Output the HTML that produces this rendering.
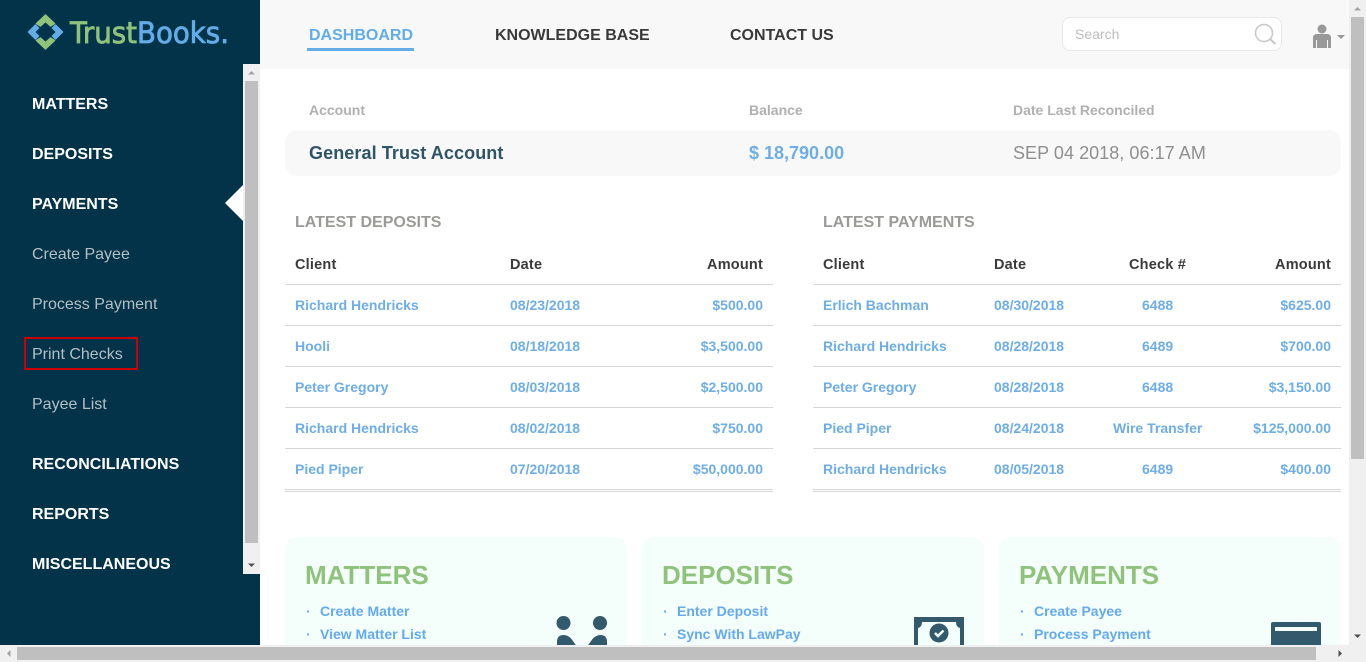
<!DOCTYPE html>
<html><head><meta charset="utf-8"><title>TrustBooks Dashboard</title>
<style>
html,body{margin:0;padding:0;width:1366px;height:662px;overflow:hidden;background:#fff;font-family:"Liberation Sans",Arial,sans-serif}
div,span,a{position:absolute;white-space:nowrap}
.n{left:32px;color:#fff;font-weight:700;font-size:16px;line-height:20px}
.s{left:32px;color:#b4bfc4;font-size:16px;line-height:20px}
.top{top:26px;font-size:16px;font-weight:700;line-height:20px;color:#3a3a3a}
.lbl{top:102px;font-size:14px;font-weight:700;line-height:16px;color:#b0b0b0}
.h{top:213px;font-size:16px;font-weight:700;line-height:18px;color:#9a9a96;padding-top:0}
.th{top:255px;font-size:14.5px;font-weight:700;line-height:18px;color:#3a3a3a;letter-spacing:.2px}
.c{font-size:14px;font-weight:700;line-height:18px;color:#6eaee6}
.r{text-align:right}
.ln{height:1px;background:#d6d6d6}
.card{top:537px;height:125px;width:342px;background:#f4fffb;border-radius:12px}
.ct{top:559px;font-size:26px;font-weight:700;line-height:32px;color:#8fc27a}
.li{font-size:14px;font-weight:700;line-height:18px;color:#65a9ee}
.d{font-size:14px;font-weight:700;line-height:18px;color:#65a9ee}
svg{position:absolute;display:block}
</style></head><body>

<!-- main top bar -->
<div style="left:260px;top:0;width:1106px;height:69px;background:#f8f8f8"></div>
<div class="top" style="left:309px;color:#62ace8">DASHBOARD</div>
<div style="left:307px;top:48px;width:107px;height:3px;background:#62ace8"></div>
<div class="top" style="left:495px">KNOWLEDGE BASE</div>
<div class="top" style="left:730px">CONTACT US</div>

<div style="left:1062px;top:17px;width:218px;height:32px;background:#fff;border:1px solid #e8e8e8;border-radius:8px"></div>
<div style="left:1075px;top:26px;font-size:14px;line-height:16px;color:#bdbdbd">Search</div>
<svg style="left:1254px;top:23px" width="24" height="22" viewBox="0 0 24 22"><circle cx="10" cy="10" r="8.5" fill="none" stroke="#c8c8c8" stroke-width="1.6"/><path d="M16 16l5.500 5" stroke="#c8c8c8" stroke-width="2" fill="none"/></svg>
<svg style="left:1312px;top:24px" width="34" height="26" viewBox="0 0 34 26"><circle cx="10" cy="5" r="4.500" fill="#999"/><path d="M1 24V14q0-4 4-4h10q4 0 4 4v10h-3v-8h-1v8H5v-8H4v8z" fill="#999"/><path d="M25 11h8l-4 4z" fill="#999"/></svg>

<!-- account -->
<div class="lbl" style="left:309px">Account</div>
<div class="lbl" style="left:749px">Balance</div>
<div class="lbl" style="left:1013px">Date Last Reconciled</div>
<div style="left:285px;top:130px;width:1056px;height:46px;background:#f8f8f8;border-radius:12px"></div>
<div style="left:309px;top:142px;font-size:18px;font-weight:700;line-height:22px;color:#2f5468;letter-spacing:.1px">General Trust Account</div>
<div style="left:749px;top:142px;font-size:18px;font-weight:700;line-height:22px;color:#6eaee6">$ 18,790.00</div>
<div style="left:1013px;top:142px;font-size:18px;line-height:22px;color:#8f8f8f;letter-spacing:.05px">SEP 04 2018, 06:17 AM</div>

<!-- deposits -->
<div class="h" style="left:295px;top:214px">LATEST DEPOSITS</div>
<div class="th" style="left:295px;top:256px">Client</div>
<div class="th" style="left:510px;top:256px">Date</div>
<div class="th r" style="right:603px;top:256px">Amount</div>
<div class="ln" style="left:285px;top:284px;width:488px"></div>
<div class="ln" style="left:285px;top:325px;width:488px"></div>
<div class="ln" style="left:285px;top:366px;width:488px"></div>
<div class="ln" style="left:285px;top:407px;width:488px"></div>
<div class="ln" style="left:285px;top:448px;width:488px"></div>
<div class="ln" style="left:285px;top:489px;width:488px"></div>
<div class="ln" style="left:285px;top:491px;width:488px"></div>

<div class="c" style="left:295px;top:296px">Richard Hendricks</div><div class="c" style="left:510px;top:296px">08/23/2018</div><div class="c r" style="right:603px;top:296px">$500.00</div>
<div class="c" style="left:295px;top:337px">Hooli</div><div class="c" style="left:510px;top:337px">08/18/2018</div><div class="c r" style="right:603px;top:337px">$3,500.00</div>
<div class="c" style="left:295px;top:378px">Peter Gregory</div><div class="c" style="left:510px;top:378px">08/03/2018</div><div class="c r" style="right:603px;top:378px">$2,500.00</div>
<div class="c" style="left:295px;top:419px">Richard Hendricks</div><div class="c" style="left:510px;top:419px">08/02/2018</div><div class="c r" style="right:603px;top:419px">$750.00</div>
<div class="c" style="left:295px;top:460px">Pied Piper</div><div class="c" style="left:510px;top:460px">07/20/2018</div><div class="c r" style="right:603px;top:460px">$50,000.00</div>

<!-- payments -->
<div class="h" style="left:823px;top:214px">LATEST PAYMENTS</div>
<div class="th" style="left:823px;top:256px">Client</div>
<div class="th" style="left:994px;top:256px">Date</div>
<div class="th" style="left:1129px;top:256px">Check #</div>
<div class="th r" style="right:35px;top:256px">Amount</div>
<div class="ln" style="left:813px;top:284px;width:528px"></div>
<div class="ln" style="left:813px;top:325px;width:528px"></div>
<div class="ln" style="left:813px;top:366px;width:528px"></div>
<div class="ln" style="left:813px;top:407px;width:528px"></div>
<div class="ln" style="left:813px;top:448px;width:528px"></div>
<div class="ln" style="left:813px;top:489px;width:528px"></div>
<div class="ln" style="left:813px;top:491px;width:528px"></div>

<div class="c" style="left:823px;top:296px">Erlich Bachman</div><div class="c" style="left:994px;top:296px">08/30/2018</div><div class="c" style="left:1142px;top:296px">6488</div><div class="c r" style="right:35px;top:296px">$625.00</div>
<div class="c" style="left:823px;top:337px">Richard Hendricks</div><div class="c" style="left:994px;top:337px">08/28/2018</div><div class="c" style="left:1142px;top:337px">6489</div><div class="c r" style="right:35px;top:337px">$700.00</div>
<div class="c" style="left:823px;top:378px">Peter Gregory</div><div class="c" style="left:994px;top:378px">08/28/2018</div><div class="c" style="left:1142px;top:378px">6488</div><div class="c r" style="right:35px;top:378px">$3,150.00</div>
<div class="c" style="left:823px;top:419px">Pied Piper</div><div class="c" style="left:994px;top:419px">08/24/2018</div><div class="c" style="left:1113px;top:419px">Wire Transfer</div><div class="c r" style="right:35px;top:419px">$125,000.00</div>
<div class="c" style="left:823px;top:460px">Richard Hendricks</div><div class="c" style="left:994px;top:460px">08/05/2018</div><div class="c" style="left:1142px;top:460px">6489</div><div class="c r" style="right:35px;top:460px">$400.00</div>

<!-- cards -->
<div class="card" style="left:285px"></div>
<div class="card" style="left:642px"></div>
<div class="card" style="left:999px"></div>

<div class="ct" style="left:305px">MATTERS</div>
<div class="d" style="left:306px;top:602px">·</div><div class="li" style="left:320px;top:602px">Create Matter</div>
<div class="d" style="left:306px;top:625px">·</div><div class="li" style="left:320px;top:625px">View Matter List</div>
<svg style="left:556px;top:616px" width="52" height="30" viewBox="0 0 52 30"><circle cx="7.500" cy="7" r="7" fill="#335a6c"/><circle cx="44" cy="7" r="7" fill="#335a6c"/><path d="M1 30v-4q0-7 6.500-7 4.500 0 8 4l5 7z" fill="#335a6c"/><path d="M51 30v-4q0-7-6.500-7-4.500 0-8 4l-5 7z" fill="#335a6c"/></svg>

<div class="ct" style="left:662px">DEPOSITS</div>
<div class="d" style="left:663px;top:602px">·</div><div class="li" style="left:677px;top:602px">Enter Deposit</div>
<div class="d" style="left:663px;top:625px">·</div><div class="li" style="left:677px;top:625px">Sync With LawPay</div>
<svg style="left:914px;top:617px" width="50" height="30" viewBox="0 0 50 30"><path d="M0 0h50v30H0z" fill="#335a6c"/><path d="M8 5h34q0 5 4 6v19H4V11q4-1 4-6z" fill="#f4fffb"/><circle cx="25" cy="16" r="9.500" fill="#335a6c"/><path d="M21 16l3 3 5.500-5.500" stroke="#f4fffb" stroke-width="2.500" fill="none"/></svg>

<div class="ct" style="left:1019px">PAYMENTS</div>
<div class="d" style="left:1020px;top:602px">·</div><div class="li" style="left:1034px;top:602px">Create Payee</div>
<div class="d" style="left:1020px;top:625px">·</div><div class="li" style="left:1034px;top:625px">Process Payment</div>
<svg style="left:1271px;top:622px" width="50" height="26" viewBox="0 0 50 26"><rect x="0" y="0" width="50" height="26" rx="2" fill="#335a6c"/><rect x="4" y="5" width="42" height="4" fill="#f4fffb"/></svg>

<!-- sidebar -->
<div style="left:0;top:0;width:260px;height:645px;background:#033349"></div>
<svg style="left:26px;top:13px" width="204" height="40" viewBox="0 0 204 40">
<g stroke-linejoin="round" stroke-width="1.500">
<path d="M19.500 2L28.500 10.500 24.500 13 19.500 8.500 14.500 13 10.500 10.500Z" fill="#8fc27a" stroke="#8fc27a"/>
<path d="M19.500 36L28.500 27.500 24.500 25 19.500 29.500 14.500 25 10.500 27.500Z" fill="#8fc27a" stroke="#8fc27a"/>
<path d="M2.500 19L9.500 12 12.500 15 8.500 19 12.500 23 9.500 26Z" fill="#62ace8" stroke="#62ace8"/>
<path d="M36.500 19L29.500 12 26.500 15 30.500 19 26.500 23 29.500 26Z" fill="#62ace8" stroke="#62ace8"/>
</g>
<text x="44" y="30" font-family="'DejaVu Sans',sans-serif" font-size="29" font-weight="400" textLength="159" lengthAdjust="spacingAndGlyphs" stroke-width=".8"><tspan fill="#8fc27a" stroke="#8fc27a">Trust</tspan><tspan fill="#62ace8" stroke="#62ace8">Books.</tspan></text>
</svg>

<div class="n" style="top:95px">MATTERS</div>
<div class="n" style="top:145px">DEPOSITS</div>
<div class="n" style="top:195px">PAYMENTS</div>
<div class="s" style="top:245px">Create Payee</div>
<div class="s" style="top:295px">Process Payment</div>
<div class="s" style="top:345px">Print Checks</div>
<div style="left:24px;top:337px;width:110px;height:29px;border:2px solid #c00"></div>
<div class="s" style="top:395px">Payee List</div>
<div class="n" style="top:455px">RECONCILIATIONS</div>
<div class="n" style="top:505px">REPORTS</div>
<div class="n" style="top:555px">MISCELLANEOUS</div>
<svg style="left:225px;top:185px" width="18" height="36" viewBox="0 0 18 36"><path d="M18 0L0 18l18 18z" fill="#fff"/></svg>

<!-- sidebar scrollbar -->
<div style="left:243px;top:64px;width:17px;height:510px;background:#f0f0f0"></div>
<div style="left:245px;top:81px;width:13px;height:462px;background:#bfbfbf"></div>
<svg style="left:243px;top:64px" width="17" height="17"><path d="M5 10.500h7L8.500 7z" fill="#a3a3a3"/></svg>
<svg style="left:243px;top:557px" width="17" height="17"><path d="M5 6.500h7L8.500 10z" fill="#505050"/></svg>

<!-- page vertical scrollbar -->
<div style="left:1349px;top:0;width:17px;height:662px;background:#f0f0f0"></div>
<div style="left:1351px;top:17px;width:13px;height:442px;background:#bfbfbf"></div>
<svg style="left:1349px;top:0" width="17" height="17"><path d="M5 10.500h7L8.500 7z" fill="#a3a3a3"/></svg>
<svg style="left:1349px;top:628px" width="17" height="17"><path d="M5 6.500h7L8.500 10z" fill="#505050"/></svg>

<!-- page horizontal scrollbar -->
<div style="left:0;top:645px;width:1349px;height:17px;background:#f0f0f0"></div>
<div style="left:17px;top:647px;width:1299px;height:13px;background:#bfbfbf"></div>
<svg style="left:0;top:645px" width="17" height="17"><path d="M10.500 5v7L7 8.500z" fill="#a3a3a3"/></svg>
<svg style="left:1332px;top:645px" width="17" height="17"><path d="M6.500 5v7L10 8.500z" fill="#505050"/></svg>
<div style="left:1349px;top:645px;width:17px;height:17px;background:#f0f0f0"></div>
</body></html>
